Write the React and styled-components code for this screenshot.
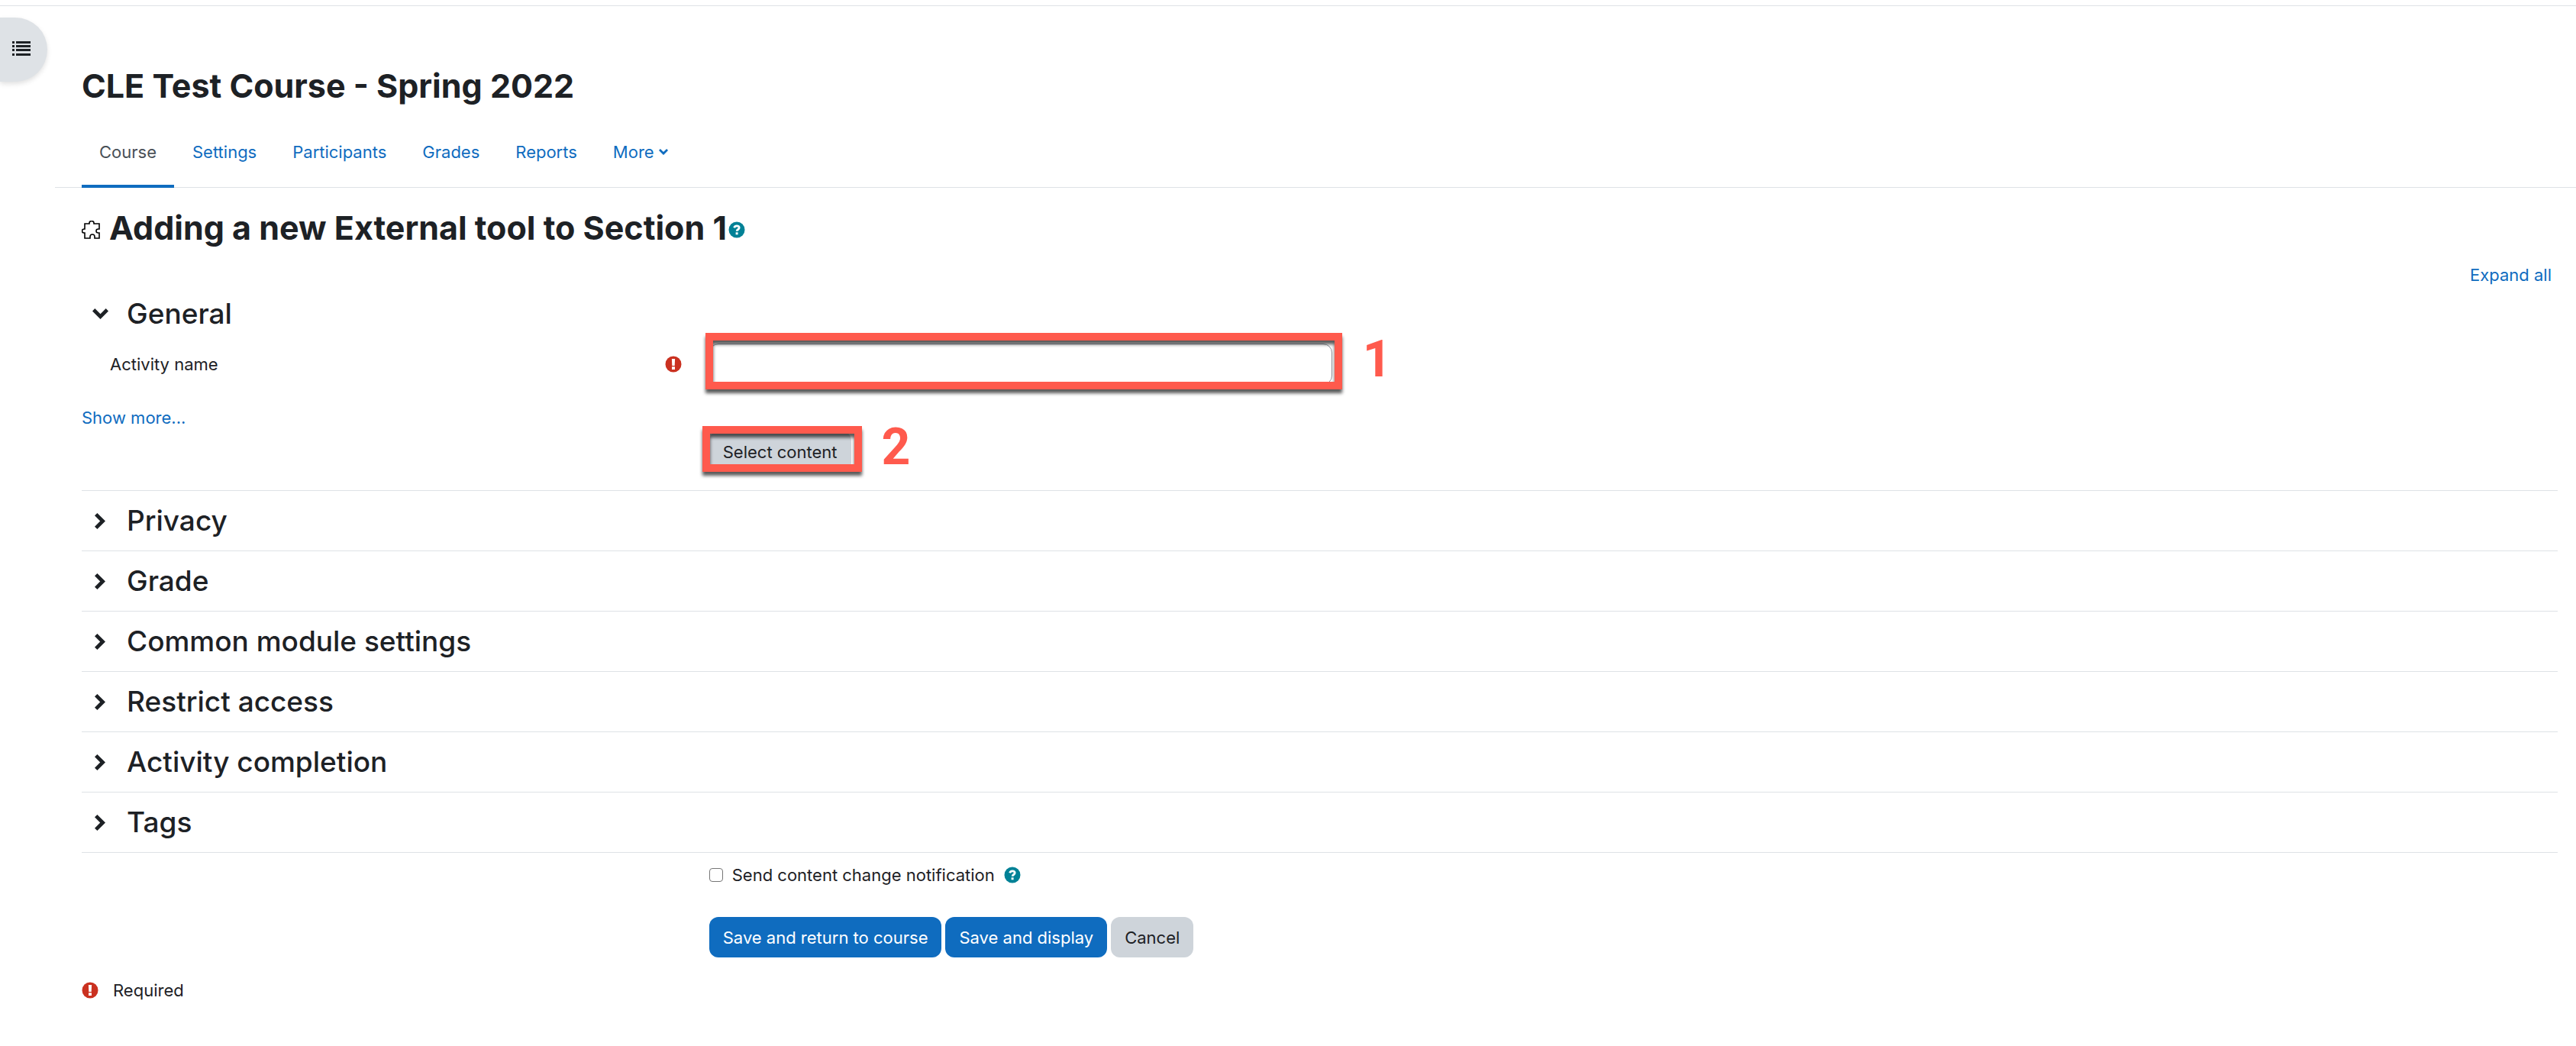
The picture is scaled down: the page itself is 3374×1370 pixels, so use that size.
import React, { useState } from "react";
import styled, { createGlobalStyle } from "styled-components";

const GlobalStyle = createGlobalStyle`
	* {
		box-sizing: border-box;
	}
	body {
		margin: 0;
		background-color: white;
		color: #1d2125;
		font-family: Inter, "Liberation Sans", sans-serif;
		font-size: 22px;
		line-height: 34px;
	}
	button,
	input {
		font: inherit;
		color: inherit;
	}
	h1,
	h2,
	h3 {
		margin: 0;
	}
`;
const Page = styled.div`
	padding-top: 7px;
	position: relative;
`;
const TopLine = styled.div`
	height: 1px;
	background-color: #dee2e6;
`;
const DrawerToggle = styled.button`
	position: absolute;
	top: 23px;
	left: 0;
	width: 62px;
	height: 84px;
	padding: 0 0 2px 16px;
	display: flex;
	align-items: center;
	border: none;
	border-radius: 0 42px 42px 0;
	background-color: #dee2e6;
	box-shadow: 0 3px 6px rgba(0, 0, 0, 0.12);
`;
const Header = styled.header`
	margin-left: 72px;
	padding: 77px 35px 0;
	border-bottom: 1px solid #dee2e6;
`;
const CourseTitle = styled.h1`
	font-size: 43px;
	line-height: 54px;
	font-weight: 700;
`;
const Tabs = styled.nav`
	display: flex;
	gap: 1px;
	margin-top: 16px;
`;
const Tab = styled.a`
	display: flex;
	align-items: center;
	gap: 6px;
	height: 91px;
	padding: 0 23px;
	margin-bottom: -1px;
	border-bottom: 4px solid ${props => (props.$active ? "#0f6cbf" : "transparent")};
	color: ${props => (props.$active ? "#495057" : "#0f6cbf")};
	text-decoration: none;
`;
const Main = styled.main`
	margin: 0 24px 0 107px;
`;
const PageHeading = styled.h2`
	display: flex;
	align-items: center;
	padding-top: 25px;
	font-size: 43px;
	line-height: 54px;
	font-weight: 700;
`;
const HeadingText = styled.span`
	margin: 0 2px 0 12px;
`;
const HeadingIcon = styled.span`
	display: flex;
	padding-top: 6px;
`;
const IconButton = styled.button`
	display: flex;
	padding: 0;
	border: none;
	background: none;
`;
const ExpandRow = styled.div`
	display: flex;
	justify-content: flex-end;
	padding: 18px 8px 0 0;
`;
const TextLink = styled.a`
	color: #0f6cbf;
	text-decoration: none;
`;
const Section = styled.section`
	border-bottom: 1px solid #dee2e6;
`;
const SectionToggle = styled.button`
	display: flex;
	align-items: center;
	gap: 24px;
	width: 100%;
	height: ${props => (props.$open ? "68px" : "78px")};
	padding: 0 0 0 13px;
	border: none;
	background: none;
	text-align: left;
`;
const SectionTitle = styled.h3`
	font-size: 37px;
	line-height: 48px;
	font-weight: 500;
`;
const Chevron = styled.span`
	display: flex;
	justify-content: center;
	width: 22px;
`;
const FieldRow = styled.div`
	display: grid;
	grid-template-columns: 25% 1fr;
	column-gap: 11px;
	align-items: center;
	padding-top: 5px;
`;
const FieldLabel = styled.div`
	display: flex;
	align-items: center;
	justify-content: space-between;
	padding: 0 25px 0 37px;
`;
const Highlight = styled.div`
	display: inline-flex;
	position: relative;
	justify-self: start;
	&::after {
		content: "";
		position: absolute;
		inset: ${props => props.$inset};
		border: 10px solid #ff5a4d;
		filter: drop-shadow(0 5px 2px rgba(0, 0, 0, 0.65));
		pointer-events: none;
	}
`;
const MarkNumber = styled.span`
	position: absolute;
	top: -12px;
	left: calc(100% + 40px);
	font-family: Roboto, "Liberation Sans", sans-serif;
	font-size: 66px;
	line-height: 66px;
	font-weight: 700;
	color: #ff5a4d;
`;
const NameInput = styled.input`
	width: 816px;
	height: 54px;
	padding: 0 18px;
	border: 1px solid #8f959e;
	border-radius: 12px;
	outline: none;
`;
const Button = styled.button`
	height: 53px;
	padding: 0 18px;
	border: none;
	border-radius: 12px;
	background-color: ${props => (props.$primary ? "#0f6cbf" : "#ced4da")};
	color: ${props => (props.$primary ? "white" : "#1d2125")};
`;
const ShowMore = styled.div`
	padding-top: 26px;
`;
const Indented = styled.div`
	display: grid;
	grid-template-columns: 25% 1fr;
	column-gap: 11px;
	& > * {
		grid-column: 2;
	}
`;
const ContentRow = styled(Indented)`
	padding: 1px 0 24px;
`;
const Footer = styled(Indented)`
	padding-top: 12px;
`;
const Notify = styled.div`
	display: flex;
	align-items: center;
	gap: 12px;
`;
const NotifyBox = styled.input`
	appearance: none;
	width: 18px;
	height: 18px;
	margin: 0;
	border: 1px solid #767676;
	border-radius: 4px;
	&:checked {
		background-color: #0f6cbf;
	}
`;
const Actions = styled.div`
	display: flex;
	gap: 5px;
	padding-top: 38px;
`;
const Required = styled.div`
	display: flex;
	align-items: center;
	gap: 19px;
	padding-top: 26px;
`;

const ListIcon = () => (
	<svg width="24" height="20" viewBox="0 0 24 20" fill="#1d2125">
		{[0, 5, 10, 16].map(y => (
			<path key={y} d={`M0 ${y}h3v3h-3zM5 ${y}h19v3h-19z`} />
		))}
	</svg>
);
const PuzzleIcon = () => (
	<svg width="24" height="24" viewBox="0 0 24 24" fill="white" stroke="black" strokeWidth="1.6">
		<path d="M4 4h6V3a3 2.500 0 0 1 6 0v1h7v7h-1.500a2.500 2.500 0 0 0 0 5H23v7h-6v-2a3 3 0 0 0-6 0v2H4v-7H3a2.500 2.500 0 0 1 0-5h1z" />
	</svg>
);
const ArrowDown = ({ width = 21, height = 14 }) => (
	<svg width={width} height={height} viewBox="0 0 21 14" fill="currentColor">
		<path d="M10.500 14L0 3.400L3.300 0l7.200 7.200L17.700 0L21 3.400z" />
	</svg>
);
const ArrowRight = () => (
	<svg width="14" height="21" viewBox="0 0 14 21" fill="currentColor">
		<path d="M14 10.500L3.400 21L0 17.700l7.200-7.200L0 3.300L3.400 0z" />
	</svg>
);
const HelpIcon = () => (
	<svg width="22" height="22" viewBox="0 0 22 22">
		<circle cx="11" cy="11" r="10.500" fill="#008196" />
		<path
			d="M7.500 8.300c.7-1.800 1.900-2.500 3.500-2.500 1.900 0 3.200 1 3.200 2.500 0 2.200-3 2.200-3 4.400"
			fill="none"
			stroke="white"
			strokeWidth="2.800"
		/>
		<path d="M9.600 14.300h3v3h-3z" fill="white" />
	</svg>
);
const RequiredIcon = () => (
	<svg width="22" height="22" viewBox="0 0 22 22">
		<circle cx="11" cy="11" r="10.500" fill="#ca3120" />
		<path d="M8.900 4h4.200l-.4 9h-3.400zM9 14.300h4v3.600h-4z" fill="white" />
	</svg>
);

const tabs = ["Course", "Settings", "Participants", "Grades", "Reports"];
const sections = [
	"Privacy",
	"Grade",
	"Common module settings",
	"Restrict access",
	"Activity completion",
	"Tags"
];

export default function App() {
	const [name, setName] = useState("");

	return (
		<Page>
			<GlobalStyle />
			<TopLine />
			<DrawerToggle aria-label="Open course index">
				<ListIcon />
			</DrawerToggle>
			<Header>
				<CourseTitle>CLE Test Course - Spring 2022</CourseTitle>
				<Tabs>
					{tabs.map((tab, i) => (
						<Tab key={tab} href="#" $active={i === 0}>
							{tab}
						</Tab>
					))}
					<Tab href="#">
						More <ArrowDown width={12} height={8} />
					</Tab>
				</Tabs>
			</Header>
			<Main>
				<PageHeading>
					<HeadingIcon>
						<PuzzleIcon />
					</HeadingIcon>
					<HeadingText>Adding a new External tool to Section 1</HeadingText>
					<HeadingIcon>
						<IconButton aria-label="Help with External tool">
							<HelpIcon />
						</IconButton>
					</HeadingIcon>
				</PageHeading>
				<ExpandRow>
					<TextLink href="#">Expand all</TextLink>
				</ExpandRow>
				<Section>
					<SectionToggle aria-expanded="true" $open>
						<Chevron>
							<ArrowDown />
						</Chevron>
						<SectionTitle>General</SectionTitle>
					</SectionToggle>
					<FieldRow>
						<FieldLabel>
							<label htmlFor="activity-name">Activity name</label>
							<RequiredIcon />
						</FieldLabel>
						<Highlight $inset="-14px -13px -6px -5px">
							<NameInput
								id="activity-name"
								type="text"
								value={name}
								onChange={e => setName(e.target.value)}
							/>
							<MarkNumber>1</MarkNumber>
						</Highlight>
					</FieldRow>
					<ShowMore>
						<TextLink href="#">Show more...</TextLink>
					</ShowMore>
					<ContentRow>
						<Highlight $inset="-7px -14px 0 -9px">
							<Button type="button">Select content</Button>
							<MarkNumber>2</MarkNumber>
						</Highlight>
					</ContentRow>
				</Section>
				{sections.map(section => (
					<Section key={section}>
						<SectionToggle aria-expanded="false">
							<Chevron>
								<ArrowRight />
							</Chevron>
							<SectionTitle>{section}</SectionTitle>
						</SectionToggle>
					</Section>
				))}
				<Footer>
					<Notify>
						<NotifyBox id="notify" type="checkbox" />
						<label htmlFor="notify">Send content change notification</label>
						<IconButton aria-label="Help with notifications">
							<HelpIcon />
						</IconButton>
					</Notify>
					<Actions>
						<Button $primary>Save and return to course</Button>
						<Button $primary>Save and display</Button>
						<Button>Cancel</Button>
					</Actions>
				</Footer>
				<Required>
					<RequiredIcon />
					<span>Required</span>
				</Required>
			</Main>
		</Page>
	);
}
